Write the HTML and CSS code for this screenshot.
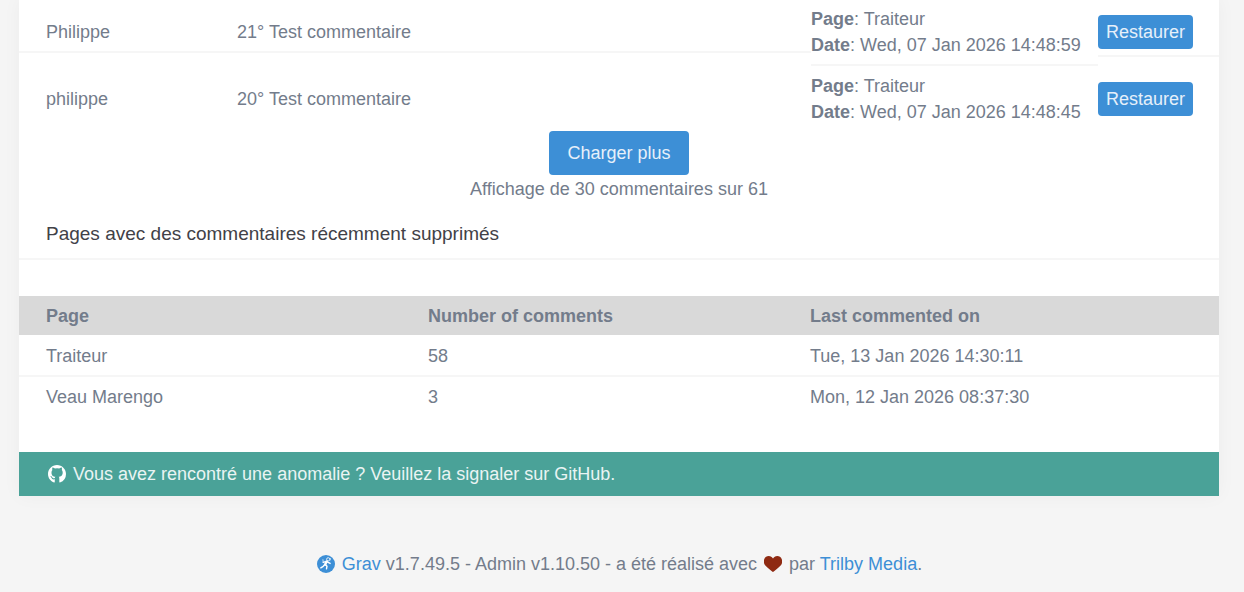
FILE: index.html
```html
<!DOCTYPE html>
<html lang="fr">
<head>
<meta charset="utf-8">
<meta name="viewport" content="width=device-width, initial-scale=1">
<title>Commentaires</title>
<link rel="stylesheet" href="styles.css">
</head>
<body>
<main class="panel">
  <table class="comments">
    <tbody>
      <tr>
        <td class="author">Philippe</td>
        <td class="message">21° Test commentaire</td>
        <td class="details"><b>Page</b>: Traiteur<br><b>Date</b>: Wed, 07 Jan 2026 14:48:59</td>
        <td class="action"><button class="button button-small" type="button">Restaurer</button></td>
      </tr>
      <tr>
        <td class="author">philippe</td>
        <td class="message">20° Test commentaire</td>
        <td class="details"><b>Page</b>: Traiteur<br><b>Date</b>: Wed, 07 Jan 2026 14:48:45</td>
        <td class="action"><button class="button button-small" type="button">Restaurer</button></td>
      </tr>
    </tbody>
  </table>
  <div class="more">
    <button class="button" type="button">Charger plus</button>
    <span>Affichage de 30 commentaires sur 61</span>
  </div>
  <h1 class="title">Pages avec des commentaires récemment supprimés</h1>
  <table class="pages">
    <thead>
      <tr><th>Page</th><th>Number of comments</th><th>Last commented on</th></tr>
    </thead>
    <tbody>
      <tr><td>Traiteur</td><td>58</td><td>Tue, 13 Jan 2026 14:30:11</td></tr>
      <tr><td>Veau Marengo</td><td>3</td><td>Mon, 12 Jan 2026 08:37:30</td></tr>
    </tbody>
  </table>
  <div class="notice">
    <svg class="icon" viewBox="0 0 16 16" aria-hidden="true"><path fill="#fff" d="M8 0C3.58 0 0 3.58 0 8c0 3.54 2.29 6.53 5.47 7.59.4.07.55-.17.55-.38V12.700c-2.010.370-2.530-.490-2.690-.940-.090-.230-.480-.940-.820-1.130-.280-.150-.680-.520-.010-.530.630-.010 1.080.580 1.230.820.720 1.210 1.870.870 2.330.660.070-.520.280-.870.510-1.070C4.800 10.300 3.100 9.600 3.100 6.600c0-.900.300-1.600.800-2.200-.080-.200-.360-1.020.080-2.120 0 0 .670-.210 2.200.820a7.600 7.600 0 0 1 3.800 0c1.530-1.040 2.200-.820 2.200-.820.440 1.100.160 1.920.080 2.120.510.560.800 1.300.800 2.200 0 3-1.870 3.700-3.550 3.900.290.250.540.730.540 1.480v3.230c0 .210.150.460.550.380A8.010 8.010 0 0 0 16 8c0-4.420-3.580-8-8-8z"/></svg>
    <a href="#">Vous avez rencontré une anomalie ? Veuillez la signaler sur GitHub.</a>
  </div>
</main>
<footer class="footer">
  <svg class="icon" viewBox="0 0 18 18" aria-hidden="true"><circle cx="9" cy="9" r="9" fill="#3d8fd6"/><circle cx="11.2" cy="4.3" r="1.600" fill="none" stroke="#fff" stroke-width=".8"/><path d="M9.600 6.500 8.300 9.300" stroke="#fff" stroke-width="2.400" stroke-linecap="round"/><path d="M8.500 6.600 6.200 7.300M10.300 6.800l2.800 1.600M8.300 9.500l1.700 1.700-.5 2.600M7.800 9.500l-1.600 1.800-2.400 1.500" fill="none" stroke="#fff" stroke-width="1.400" stroke-linecap="round" stroke-linejoin="round"/><path d="m13 5.500.4-2.500M6.200 7.300l-.3-3" stroke="#fff" stroke-width=".7"/></svg>
  <p><a href="#">Grav</a> v1.7.49.5 - Admin v1.10.50 - a été réalisé avec</p>
  <svg class="icon heart" viewBox="0 0 18 16" role="img" aria-label="amour"><path fill="#8f2a12" d="M9 16C8.600 16 1.200 9.500.6 8.400-.3 7-.2 4.800.2 3.300 1 .9 2.800 0 4.700 0 6.700 0 8 1.200 9 2.500 10 1.200 11.300 0 13.300 0c1.900 0 3.700.9 4.500 3.300.4 1.500.5 3.700-.4 5.100C16.800 9.500 9.400 16 9 16z"/></svg>
  <p>par <a href="#">Trilby Media</a>.</p>
</footer>
</body>
</html>
```
FILE: styles.css
```css
* {
  box-sizing: border-box;
}

body {
  margin: 0;
  background: #f5f5f5;
  color: #737c8b;
  font: 18px/26px "Helvetica Neue", "Liberation Sans", Arial, sans-serif;
  overflow: hidden;
}

a {
  color: #3d8fd6;
  text-decoration: none;
}

p {
  margin: 0;
}

.panel {
  margin: -1px 25px 0 19px;
  background: #fff;
  box-shadow: 0 0 18px rgba(0, 0, 0, 0.04);
}

.comments,
.pages {
  display: block;
}

.comments tbody,
.pages thead,
.pages tbody {
  display: block;
}

.comments tr {
  display: flex;
  align-items: center;
}

.comments td {
  display: block;
  flex: 1 1 0;
  padding: 7px 0 6px;
  border-bottom: 2px solid #f6f6f6;
}

.comments tr:last-child td,
.pages tbody tr:last-child {
  border-bottom: 0;
}

.comments .author {
  flex-grow: 191;
  padding-left: 27px;
}

.comments .message {
  flex-grow: 574;
}

.comments .details {
  flex-grow: 287;
}

.comments .action {
  flex-grow: 121;
}

.button {
  display: block;
  padding: 9px 18px;
  border: 0;
  border-radius: 4px;
  background: #3d8fd6;
  color: #e6f0fa;
  font: inherit;
}

.button-small {
  padding: 4px 8px;
}

.more {
  display: flex;
  flex-direction: column;
  align-items: center;
  gap: 1px;
}

.title {
  margin: 0 0 36px;
  padding: 19px 27px 11px;
  border-bottom: 2px solid #f6f6f6;
  color: #414147;
  font-size: 19px;
  font-weight: 400;
}

.pages {
  margin-bottom: 36px;
}

.pages tr {
  display: flex;
  padding: 7px 27px 6px;
}

.pages thead tr {
  background: #d9d9d9;
}

.pages tbody tr {
  padding-top: 8px;
  border-bottom: 2px solid #f6f6f6;
}

.pages tbody tr:last-child {
  padding-top: 7px;
}

.pages th,
.pages td {
  display: block;
  flex: 1;
  padding: 0;
  text-align: left;
}

.icon {
  flex: none;
  width: 18px;
  height: 18px;
}

.heart {
  height: 16px;
}

.notice {
  display: flex;
  align-items: center;
  gap: 7px;
  padding: 9px 29px;
  background: #4aa298;
}

.notice a {
  color: #e9f4f3;
}

.footer {
  display: flex;
  justify-content: center;
  align-items: center;
  gap: 7px;
  margin: 55px 5px 0 0;
}
```
